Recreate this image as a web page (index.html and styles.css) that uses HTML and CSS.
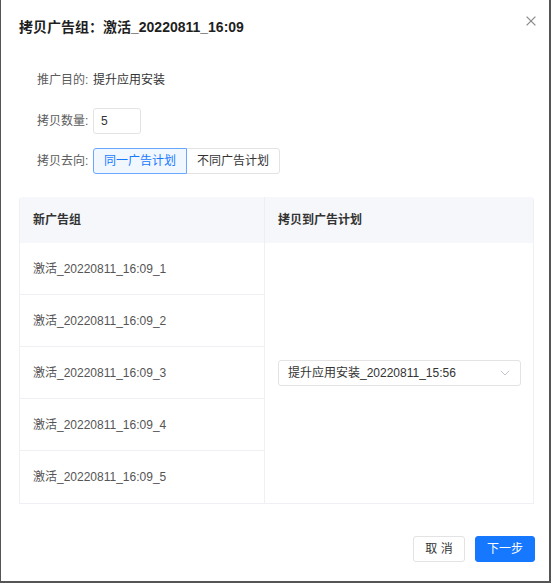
FILE: index.html
```html
<!DOCTYPE html>
<html lang="zh-CN">
<head>
<meta charset="utf-8">
<title>拷贝广告组</title>
<link rel="stylesheet" href="styles.css">
</head>
<body>
<div class="modal">
  <div class="modal-header">
    <div class="modal-title">拷贝广告组：激活_20220811_16:09</div>
    <button class="modal-close" aria-label="关闭">
      <svg width="10" height="10" viewBox="0 0 10 10"><path d="M0.6 0.6 L9.4 9.4 M9.4 0.6 L0.6 9.4" stroke="#8c8c8c" stroke-width="1.3" fill="none"/></svg>
    </button>
  </div>
  <div class="modal-body">
    <div class="form">
      <div class="form-row">
        <span class="label">推广目的:</span>
        <span class="value">提升应用安装</span>
      </div>
      <div class="form-row">
        <span class="label">拷贝数量:</span>
        <div class="input">5</div>
      </div>
      <div class="form-row">
        <span class="label">拷贝去向:</span>
        <div class="radio-group">
          <div class="radio-btn active">同一广告计划</div>
          <div class="radio-btn">不同广告计划</div>
        </div>
      </div>
    </div>
    <div class="table">
      <div class="th th-first">新广告组</div>
      <div class="th th-last">拷贝到广告计划</div>
      <div class="td">激活_20220811_16:09_1</div>
      <div class="td">激活_20220811_16:09_2</div>
      <div class="td">激活_20220811_16:09_3</div>
      <div class="td">激活_20220811_16:09_4</div>
      <div class="td td-last">激活_20220811_16:09_5</div>
      <div class="select-cell">
        <div class="select">
          <span class="select-text">提升应用安装_20220811_15:56</span>
          <svg class="select-arrow" width="10" height="6" viewBox="0 0 10 6"><path d="M0.8 0.8 L5 5 L9.2 0.8" stroke="#c0c4cc" stroke-width="1" fill="none"/></svg>
        </div>
      </div>
    </div>
  </div>
  <div class="modal-footer">
    <button class="btn">取 消</button>
    <button class="btn btn-primary">下一步</button>
  </div>
</div>
</body>
</html>
```

FILE: styles.css
```css
html, body {
  margin: 0;
  padding: 0;
  background: #555555;
  height: 583px;
  overflow: hidden;
}

body {
  font-family: "Liberation Sans", "Noto Sans CJK SC", sans-serif;
  font-size: 12px;
  color: #333;
}

.modal {
  position: relative;
  box-sizing: border-box;
  margin-left: 1px;
  width: 548px;
  height: 581px;
  background: #fff;
  display: flex;
  flex-direction: column;
}

.modal-header {
  box-sizing: border-box;
  height: 54px;
  padding-left: 18px;
  display: flex;
  align-items: center;
  flex: none;
}

.modal-title {
  font-size: 14px;
  font-weight: 700;
  color: #1f1f1f;
  line-height: 20px;
}

.modal-close {
  position: absolute;
  top: 16px;
  right: 13px;
  width: 10px;
  height: 10px;
  padding: 0;
  border: 0;
  background: transparent;
  display: flex;
}

.modal-body {
  flex: 1;
  padding: 13px 15px 0 18px;
}

.form {
  padding-left: 18px;
  display: flex;
  flex-direction: column;
  gap: 14.5px;
}

.form-row {
  height: 26px;
  display: flex;
  align-items: center;
}

.label {
  width: 56px;
  color: #5c5c5c;
  line-height: 18px;
}

.value {
  color: #333;
  line-height: 18px;
}

.input {
  box-sizing: border-box;
  width: 48px;
  height: 26px;
  border: 1px solid #e3e3e3;
  border-radius: 3px;
  padding-left: 7px;
  line-height: 24px;
  color: #333;
}

.radio-group {
  display: flex;
}

.radio-btn {
  box-sizing: border-box;
  height: 26px;
  width: 94px;
  border: 1px solid #e3e3e3;
  line-height: 24px;
  text-align: center;
  color: #333;
}

.radio-btn:first-child {
  border-radius: 3px 0 0 3px;
}

.radio-btn + .radio-btn {
  margin-left: -1px;
  border-radius: 0 3px 3px 0;
}

.radio-btn.active {
  position: relative;
  z-index: 1;
  background: #f0f7ff;
  border-color: #6aa8ff;
  color: #1677ff;
}

.table {
  box-sizing: border-box;
  width: 515px;
  margin-top: 23px;
  display: grid;
  grid-template-columns: 245px 1fr;
  grid-template-rows: 46px repeat(5, 52px);
  border: 1px solid #eef0f3;
  border-top: 0;
  border-radius: 4px 4px 0 0;
}

.th {
  background: #f5f7fa;
  font-weight: 700;
  color: #333;
  display: flex;
  align-items: center;
  padding-left: 13px;
  line-height: 18px;
}

.th-first {
  border-radius: 4px 0 0 0;
  border-right: 1px solid #ebeef2;
}

.th-last {
  border-radius: 0 4px 0 0;
}

.td {
  display: flex;
  align-items: center;
  padding-left: 13px;
  color: #555;
  line-height: 18px;
  border-right: 1px solid #eef0f3;
  border-bottom: 1px solid #eef0f3;
}

.td-last {
  border-bottom: 0;
}

.select-cell {
  grid-column: 2;
  grid-row: 2 / span 5;
  display: flex;
  align-items: center;
  padding: 0 12px 0 13px;
}

.select {
  box-sizing: border-box;
  width: 100%;
  height: 26px;
  border: 1px solid #e3e3e3;
  border-radius: 3px;
  display: flex;
  align-items: center;
  justify-content: space-between;
  padding: 0 10px 0 9px;
}

.select-text {
  color: #333;
  line-height: 18px;
}

.modal-footer {
  box-sizing: border-box;
  flex: none;
  height: 45px;
  padding: 0 14px 0 0;
  display: flex;
  justify-content: flex-end;
  align-items: flex-start;
  gap: 10px;
}

.btn {
  box-sizing: border-box;
  height: 26px;
  width: 52px;
  border: 1px solid #e3e3e3;
  border-radius: 3px;
  background: #fff;
  font-family: "Liberation Sans", "Noto Sans CJK SC", sans-serif;
  font-size: 12px;
  color: #333;
  padding: 0;
  line-height: 24px;
}

.btn-primary {
  width: 60px;
  background: #1677ff;
  border-color: #1677ff;
  color: #fff;
}
```
